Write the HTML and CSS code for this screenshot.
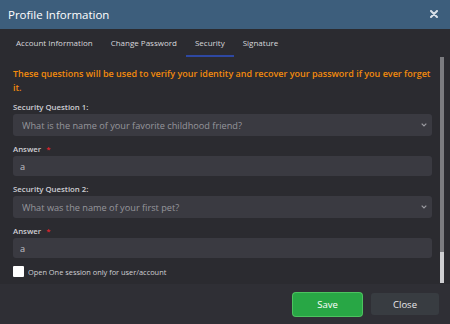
FILE: index.html
```html
<!DOCTYPE html>
<html lang="en">
<head>
  <meta charset="UTF-8" />
  <title>Profile Information</title>
  <link rel="stylesheet" href="styles.css">
</head>
<body>
  <div class="modal">
    <div class="modal-header">
      <h2>Profile Information</h2>
      <button class="close" aria-label="Close">
        <svg width="8" height="8" viewBox="0 0 8 8"><path d="M1 1L7 7M7 1L1 7" stroke="#d9e0e8" stroke-width="2" stroke-linecap="round"/></svg>
      </button>
    </div>

    <ul class="tabs">
      <li>Account Information</li>
      <li>Change Password</li>
      <li class="active">Security</li>
      <li>Signature</li>
    </ul>

    <div class="body-wrap">
      <div class="modal-body">
        <p class="notice">These questions will be used to verify your identity and recover your password if you ever forget it.</p>

        <div class="field">
          <label>Security Question 1:</label>
          <div class="select-wrap">
            <select>
              <option>What is the name of your favorite childhood friend?</option>
            </select>
            <svg class="chevron" width="6" height="4" viewBox="0 0 6 4"><path d="M0.7 0.7L3 3L5.3 0.7" stroke="#9a9aa0" stroke-width="1.2" fill="none"/></svg>
          </div>
        </div>

        <div class="field">
          <label>Answer <span class="req">*</span></label>
          <input type="text" value="a">
        </div>

        <div class="field">
          <label>Security Question 2:</label>
          <div class="select-wrap">
            <select>
              <option>What was the name of your first pet?</option>
            </select>
            <svg class="chevron" width="6" height="4" viewBox="0 0 6 4"><path d="M0.7 0.7L3 3L5.3 0.7" stroke="#9a9aa0" stroke-width="1.2" fill="none"/></svg>
          </div>
        </div>

        <div class="field">
          <label>Answer <span class="req">*</span></label>
          <input type="text" value="a">
        </div>

        <label class="check">
          <span class="box"></span>
          Open One session only for user/account
        </label>
      </div>

      <!-- scrollbar, drawn by hand -->
      <div class="scrollbar"><div class="thumb"></div></div>
    </div>

    <div class="modal-footer">
      <button class="btn btn-save">Save</button>
      <button class="btn btn-close">Close</button>
    </div>
  </div>
</body>
</html>
```

FILE: styles.css
```css
* {
  box-sizing: border-box;
  margin: 0;
  padding: 0;
}
body {
  font-family: 'Open Sans', sans-serif;
  background: #2b2b30;
  color: #e4e4e8;
}
.modal {
  width: 450px;
  height: 324px;
  display: flex;
  flex-direction: column;
  background: #2b2b30;
}
.modal-header {
  height: 29px;
  flex-shrink: 0;
  background: #3d5e7c;
  display: flex;
  align-items: center;
  justify-content: space-between;
  padding: 0 12px 0 8px;
}
.modal-header h2 {
  font-size: 11.5px;
  font-weight: 400;
  color: #fff;
}
.close {
  background: none;
  border: none;
  display: flex;
  margin-top: -2px;
}
.tabs {
  list-style: none;
  display: flex;
  flex-shrink: 0;
  height: 28px;
  padding: 0 0 0 7px;
  align-items: stretch;
}
.tabs li {
  font-size: 8px;
  color: #d8d8dc;
  padding: 0 9px;
  display: flex;
  align-items: center;
  padding-bottom: 1px;
}
.tabs li.active {
  border-bottom: 2px solid #2e48a2;
  padding-bottom: 0;
  padding-top: 1px;
}
.body-wrap {
  flex: 1;
  display: flex;
  overflow: hidden;
}
.modal-body {
  flex: 1;
  padding: 10px 8px 0 13px;
}
.scrollbar {
  width: 4px;
  margin: 0 6px 1px 0;
  background: #cfcfd2;
}
.scrollbar .thumb {
  height: 195px;
  background: #7c7c80;
}
.notice {
  color: #f28a0d;
  font-size: 9px;
  font-weight: 600;
  line-height: 13.5px;
  margin-bottom: 8px;
}
.field {
  margin-bottom: 8px;
}
.field label {
  display: block;
  font-size: 7.8px;
  font-weight: 600;
  line-height: 11px;
  color: #cfcfd4;
  margin-bottom: 1px;
}
.req {
  color: #e0242c;
  margin-left: 3px;
}
.select-wrap {
  position: relative;
}
.select-wrap .chevron {
  position: absolute;
  right: 5px;
  top: 9px;
}
select, input[type="text"] {
  display: block;
  width: 100%;
  height: 22px;
  background: #3a3a41;
  border: none;
  border-radius: 3px;
  font-family: 'Open Sans', sans-serif;
  font-size: 9.2px;
  padding: 0 9px;
  appearance: none;
  outline: none;
}
select {
  color: #96969c;
}
input[type="text"] {
  color: #c0c0c6;
  height: 20px;
  padding: 0 7px;
}
.check {
  display: flex;
  align-items: center;
  gap: 4px;
  font-size: 7.4px;
  color: #d0d0d4;
}
.check .box {
  width: 11px;
  height: 11px;
  background: #fff;
  border-radius: 1px;
}
.modal-footer {
  height: 40px;
  flex-shrink: 0;
  background: #2f2f35;
  display: flex;
  justify-content: flex-end;
  align-items: center;
  gap: 9px;
  padding-right: 11px;
}
.btn {
  font-family: 'Open Sans', sans-serif;
  font-size: 9.5px;
  color: #fff;
  border: none;
  border-radius: 3px;
  height: 22px;
  width: 68px;
}
.btn-save {
  background: #28a745;
  box-shadow: 0 0 0 1px #4cc35f;
  width: 69px;
  height: 23px;
}
.btn-close {
  background: #383c41;
  color: #e8e8ea;
}
```
